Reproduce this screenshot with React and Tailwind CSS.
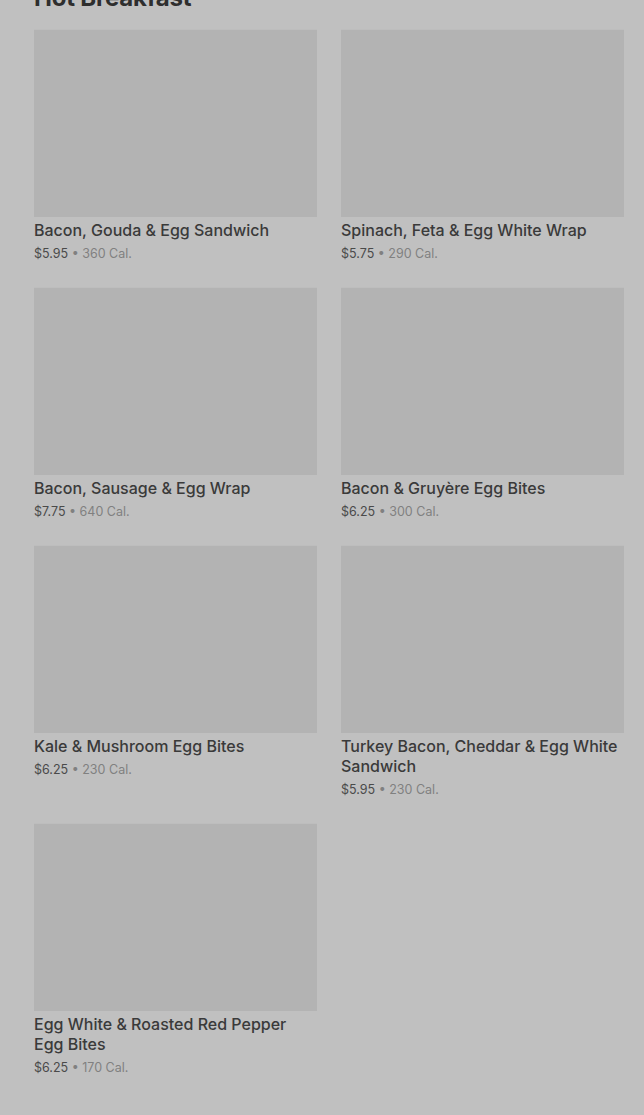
import React from "react";

const items = [
  { name: "Bacon, Gouda & Egg Sandwich", price: "$5.95", cal: "360 Cal." },
  { name: "Spinach, Feta & Egg White Wrap", price: "$5.75", cal: "290 Cal." },
  { name: "Bacon, Sausage & Egg Wrap", price: "$7.75", cal: "640 Cal." },
  { name: "Bacon & Gruyère Egg Bites", price: "$6.25", cal: "300 Cal." },
  { name: "Kale & Mushroom Egg Bites", price: "$6.25", cal: "230 Cal." },
  { name: "Turkey Bacon, Cheddar & Egg White Sandwich", price: "$5.95", cal: "230 Cal." },
  { name: "Egg White & Roasted Red Pepper Egg Bites", price: "$6.25", cal: "170 Cal." },
];

export default function App() {
  return (
    <div
      className="w-[644px] h-[1115px] overflow-hidden bg-[#c0c0c0] text-[#333333]"
      style={{ fontFamily: "Inter, 'Liberation Sans', sans-serif" }}
    >
      <div className="pl-[34px] pr-[20px]">
        <h2 className="mt-[-18px] text-[24px] leading-[32px] font-bold text-[#2e2e2e] tracking-[-0.2px]">
          Hot Breakfast
        </h2>
        <div className="mt-[15px] grid grid-cols-2 gap-x-[24px] gap-y-[23px] items-start">
          {items.map((it) => (
            <div key={it.name} className="flex flex-col">
              <div className="h-[188px] bg-[#b3b3b3] border-t border-[#bdbdbd]" />
              <div className="mt-[3px] text-[16px] leading-[20px] font-medium text-[#3a3a3a]">
                {it.name}
              </div>
              <div className="mt-[4px] text-[12.5px] leading-[20px] text-[#808080]">
                <span className="text-[#4a4a4a]">{it.price}</span>
                <span> • {it.cal}</span>
              </div>
            </div>
          ))}
        </div>
      </div>
    </div>
  );
}
